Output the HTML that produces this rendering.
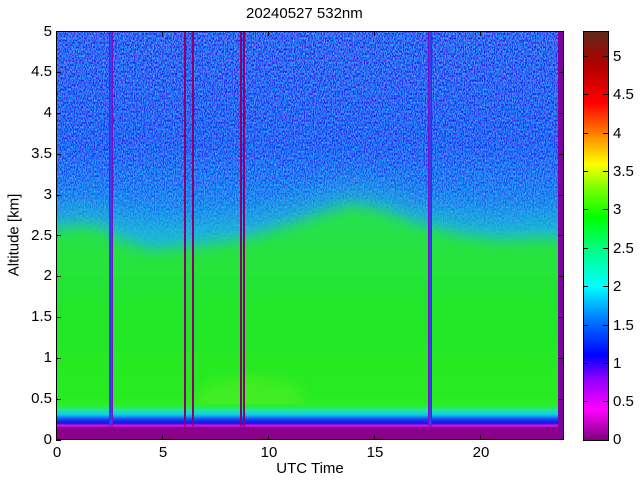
<!DOCTYPE html>
<html><head><meta charset="utf-8"><style>
html,body{margin:0;padding:0;background:#fff;width:640px;height:480px;overflow:hidden}
#w{position:relative;width:640px;height:480px;font-family:"Liberation Sans",Arial,sans-serif;color:#000}
.t{position:absolute;font-size:15px;line-height:15px;white-space:nowrap}
.yl{right:588px;text-align:right}
.xl{transform:translateX(-50%)}
.cl{left:613px}
#cb{position:absolute;left:583px;top:31px;width:24px;height:408px;border:1px solid #000;
background:linear-gradient(to top,#800080 0%,#ff00ff 7.5%,#9000ff 15%,#0000ff 20.7%,#0080ff 30%,#00ffff 37.6%,#00ff80 47%,#00ff00 54.5%,#80ff00 62%,#ffff00 67.6%,#ff8000 75%,#ff0000 82.6%,#b00000 92%,#602818 100%)}
</style></head><body><div id="w">
<svg width="640" height="480" style="position:absolute;left:0;top:0">
<defs>
<linearGradient id="bg" x1="0" y1="0" x2="0" y2="1">
<stop offset="0" stop-color="#3048e4"/><stop offset="0.28" stop-color="#2050ee"/><stop offset="0.4" stop-color="#1a80ec"/><stop offset="0.5" stop-color="#18b0e4"/><stop offset="1" stop-color="#18c8d8"/>
</linearGradient>
<linearGradient id="gr" x1="0" y1="0" x2="0" y2="1">
<stop offset="0" stop-color="#28e050"/><stop offset="0.5" stop-color="#22e626"/><stop offset="1" stop-color="#2cee20"/>
</linearGradient>
<linearGradient id="bt" x1="0" y1="0" x2="0" y2="1">
<stop offset="0" stop-color="#2cee20"/><stop offset="0.25" stop-color="#20e890"/><stop offset="0.45" stop-color="#10c8f0"/><stop offset="0.65" stop-color="#1040f0"/><stop offset="0.8" stop-color="#2010e0"/><stop offset="0.9" stop-color="#e010f0"/><stop offset="1" stop-color="#8b008b"/>
</linearGradient>
<filter id="bl" x="-5%" y="-10%" width="110%" height="120%"><feGaussianBlur stdDeviation="7"/></filter>
<filter id="bl2" x="-5%" y="-10%" width="110%" height="120%"><feGaussianBlur stdDeviation="14"/></filter>
<filter id="nz" x="0" y="0" width="100%" height="100%">
<feTurbulence type="fractalNoise" baseFrequency="0.9 0.45" numOctaves="1" seed="3"/>
<feColorMatrix type="matrix" values="2.2 0 0 0 -1.1  0 3 0 0 -1.2  0 0 0 0 1  0 0 0 0 1"/>
</filter>
<linearGradient id="fm" x1="0" y1="0" x2="0" y2="1"><stop offset="0" stop-color="#fff"/><stop offset="0.6" stop-color="#ccc"/><stop offset="1" stop-color="#000"/></linearGradient>
<mask id="mk"><rect x="56" y="31" width="508" height="240" fill="url(#fm)"/></mask>
<clipPath id="cp"><rect x="56" y="31" width="508" height="409"/></clipPath>
</defs>
<g clip-path="url(#cp)">
<rect x="56" y="31" width="508" height="409" fill="url(#bg)"/>
<rect x="56" y="31" width="508" height="240" filter="url(#nz)" mask="url(#mk)" opacity="0.5"/>
<path filter="url(#bl2)" fill="#20c0c8" opacity="0.7" d="M40,440 L40,215 L80,210 L100,212 L120,224 L150,234 L200,230 L250,222 L300,206 L350,188 L380,193 L420,209 L460,219 L500,224 L540,222 L580,224 L580,440Z"/>
<path filter="url(#bl)" fill="url(#gr)" d="M40,440 L40,232 L80,226 L100,228 L120,240 L150,250 L200,246 L250,238 L300,222 L350,205 L380,210 L420,225 L460,235 L500,240 L540,238 L580,240 L580,440Z"/>
<ellipse cx="250" cy="398" rx="55" ry="22" fill="#60f020" opacity="0.45" filter="url(#bl)"/>
<rect x="56" y="404" width="508" height="24" fill="url(#bt)"/>
<rect x="56" y="427" width="508" height="13" fill="#8b008b"/>
<rect x="558" y="31" width="6" height="409" fill="#8000a0"/>
<rect x="109" y="31" width="4" height="395" fill="#7a10c0"/><rect x="110" y="31" width="2" height="395" fill="#3040f0"/>
<rect x="184" y="31" width="2" height="395" fill="#8b0070"/>
<rect x="192" y="31" width="2" height="395" fill="#8b0070"/>
<rect x="240" y="31" width="2" height="395" fill="#8b0070"/>
<rect x="243" y="31" width="2" height="395" fill="#8b0070"/>
<rect x="428" y="31" width="4" height="395" fill="#7a10c0"/><rect x="429" y="31" width="2" height="395" fill="#3040f0"/>
</g>
<rect x="56.5" y="31.5" width="507" height="408" fill="none" stroke="#000" stroke-width="1"/>
<g stroke="#000" stroke-width="1">
<path d="M56,440.5h5M56,399.5h5M56,358.5h5M56,317.5h5M56,276.5h5M56,235.5h5M56,195.5h5M56,154.5h5M56,113.5h5M56,72.5h5M56,31.5h5"/>
<path d="M564,399.5h-5M564,358.5h-5M564,317.5h-5M564,276.5h-5M564,235.5h-5M564,195.5h-5M564,154.5h-5M564,113.5h-5M564,72.5h-5"/>
<path d="M162.5,440v-5M268.5,440v-5M374.5,440v-5M480.5,440v-5M162.5,31v5M268.5,31v5M374.5,31v5M480.5,31v5"/>
</g>
</svg>
<div id="cb"></div>
<svg width="640" height="480" style="position:absolute;left:0;top:0"><g stroke="#000" stroke-width="1">
<path d="M603,401.5h5M603,363.5h5M603,325.5h5M603,286.5h5M603,248.5h5M603,209.5h5M603,171.5h5M603,133.5h5M603,94.5h5M603,56.5h5"/>
<path d="M584,401.5h4M584,363.5h4M584,325.5h4M584,286.5h4M584,248.5h4M584,209.5h4M584,171.5h4M584,133.5h4M584,94.5h4M584,56.5h4"/></g></svg>
<div class="t" style="left:246px;top:6px">20240527 532nm</div>
<div class="t yl" style="top:432px">0</div>
<div class="t yl" style="top:391px">0.5</div>
<div class="t yl" style="top:350px">1</div>
<div class="t yl" style="top:309px">1.5</div>
<div class="t yl" style="top:268px">2</div>
<div class="t yl" style="top:228px">2.5</div>
<div class="t yl" style="top:187px">3</div>
<div class="t yl" style="top:146px">3.5</div>
<div class="t yl" style="top:105px">4</div>
<div class="t yl" style="top:64px">4.5</div>
<div class="t yl" style="top:24px">5</div>
<div class="t xl" style="left:57px;top:445px">0</div>
<div class="t xl" style="left:163px;top:445px">5</div>
<div class="t xl" style="left:269px;top:445px">10</div>
<div class="t xl" style="left:375px;top:445px">15</div>
<div class="t xl" style="left:481px;top:445px">20</div>
<div class="t xl" style="left:310px;top:461px">UTC Time</div>
<div class="t" style="left:14px;top:235px;transform:translate(-50%,-50%) rotate(-90deg)">Altitude [km]</div>
<div class="t cl" style="top:432px">0</div>
<div class="t cl" style="top:394px">0.5</div>
<div class="t cl" style="top:356px">1</div>
<div class="t cl" style="top:318px">1.5</div>
<div class="t cl" style="top:279px">2</div>
<div class="t cl" style="top:241px">2.5</div>
<div class="t cl" style="top:202px">3</div>
<div class="t cl" style="top:164px">3.5</div>
<div class="t cl" style="top:126px">4</div>
<div class="t cl" style="top:87px">4.5</div>
<div class="t cl" style="top:49px">5</div>
</div></body></html>
